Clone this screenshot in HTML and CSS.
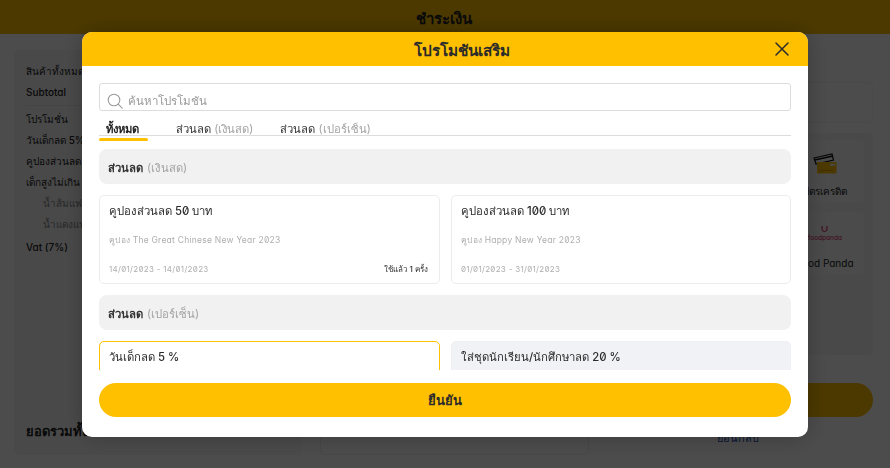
FILE: index.html
```html
<!DOCTYPE html>
<html lang="th">
<head>
<meta charset="utf-8">
<title>ชำระเงิน</title>
<link rel="stylesheet" href="styles.css">
</head>
<body>
<div class="page">
  <header class="page-head">ชำระเงิน</header>
  <main class="page-main">
    <section class="summary">
      <div class="sum-top">
        <p class="sum-row">สินค้าทั้งหมด</p>
        <p class="sum-row">Subtotal</p>
      </div>
      <p class="sum-row">โปรโมชั่น</p>
      <p class="sum-row">วันเด็กลด 5%</p>
      <p class="sum-row">คูปองส่วนลด</p>
      <p class="sum-row">เด็กสูงไม่เกิน</p>
      <p class="sum-row sum-sub">น้ำส้มแฟนต้า</p>
      <p class="sum-row sum-sub">น้ำแดงแฟนต้า</p>
      <p class="sum-row sum-vat">Vat (7%)</p>
      <p class="sum-total">ยอดรวมทั้งหมด</p>
    </section>
    <div class="pay-box"></div>
    <div class="pay-col">
      <div class="pay-info"></div>
      <div class="pay-methods">
        <div class="pay-tile">
          <svg class="card-icon" width="24" height="21" viewBox="0 0 24 21"><path d="M1 5 19 1l1.500 6L3 11z" fill="#fff" stroke="#111" stroke-width="1.200"/><path d="M1.500 7 20 3" stroke="#111" stroke-width="1.400"/><rect x="4" y="9" width="19.500" height="11.500" rx="1" fill="#ffc000"/><rect x="17" y="10.500" width="5" height="2.500" fill="#f3e9c8"/><path d="M6 17.500h14" stroke="#d9a400" stroke-width="1"/></svg>
          <span>บัตรเครดิต</span>
        </div>
        <div class="pay-tile">
          <div class="fp">
            <svg class="fp-icon" width="7" height="7" viewBox="0 0 7 7"><path d="M1 1v3a2.500 2.500 0 0 0 5 0V1" fill="none" stroke="#d70f64"/><path d="M2.500 3h.1M4.500 3h.1" stroke="#d70f64"/></svg>
            <span class="fp-logo">foodpanda</span>
          </div>
          <span>Food Panda</span>
        </div>
      </div>
      <div class="pay-btn"></div>
      <a class="pay-back">ย้อนกลับ</a>
    </div>
  </main>
</div>

<div class="overlay">
  <div class="modal">
    <div class="modal-head">
      <h1 class="modal-title">โปรโมชันเสริม</h1>
      <svg class="modal-close" width="16" height="16" viewBox="0 0 16 16"><path d="M2 2l12 12M14 2 2 14" fill="none" stroke="#2b2b2b" stroke-width="1.500" stroke-linecap="round"/></svg>
    </div>
    <div class="modal-body">
      <div class="search">
        <svg class="search-icon" width="16" height="16" viewBox="0 0 16 16"><circle cx="7" cy="7" r="5.800" fill="none" stroke="#9a9a9a" stroke-width="1.100"/><path d="m11.200 11.200 4 4" stroke="#9a9a9a" stroke-width="1.100" stroke-linecap="round"/></svg>
        <span class="search-text">ค้นหาโปรโมชัน</span>
      </div>
      <nav class="tabs">
        <span class="tab tab-active">ทั้งหมด</span>
        <span class="tab">ส่วนลด <em>(เงินสด)</em></span>
        <span class="tab">ส่วนลด <em>(เปอร์เซ็น)</em></span>
      </nav>
      <div class="promo-scroll">
        <div class="sec-bar">ส่วนลด <em>(เงินสด)</em></div>
        <div class="promo-grid">
          <article class="promo">
            <h2 class="promo-name">คูปองส่วนลด 50 บาท</h2>
            <p class="promo-desc">คูปอง The Great Chinese New Year 2023</p>
            <div class="promo-foot"><span class="promo-date">14/01/2023 - 14/01/2023</span><b>ใช้แล้ว 1 ครั้ง</b></div>
          </article>
          <article class="promo">
            <h2 class="promo-name">คูปองส่วนลด 100 บาท</h2>
            <p class="promo-desc">คูปอง Happy New Year 2023</p>
            <div class="promo-foot"><span class="promo-date">01/01/2023 - 31/01/2023</span></div>
          </article>
        </div>
        <div class="sec-bar">ส่วนลด <em>(เปอร์เซ็น)</em></div>
        <div class="promo-grid">
          <article class="promo promo-selected">
            <h2 class="promo-name">วันเด็กลด 5 %</h2>
          </article>
          <article class="promo promo-off">
            <h2 class="promo-name">ใส่ชุดนักเรียน/นักศึกษาลด 20 %</h2>
          </article>
        </div>
      </div>
      <button class="confirm" type="button">ยืนยัน</button>
    </div>
  </div>
</div>
</body>
</html>
```
FILE: styles.css
```css
* { box-sizing: border-box; }
html, body { margin: 0; height: 100%; }
body {
  width: 890px;
  height: 468px;
  overflow: hidden;
  background: #fff;
  font-family: "Inter", "Noto Sans", "DejaVu Sans", sans-serif;
  font-feature-settings: "zero", "cv11";
  color: #222;
}
p, h1, h2 { margin: 0; font-weight: inherit; }
em { font-style: normal; color: #a3a3a3; }

.page-head {
  height: 34px;
  background: #ffc000;
  text-align: center;
  font-size: 15px;
  font-weight: 600;
  line-height: 37px;
  padding-right: 3px;
}
.page-main {
  display: grid;
  grid-template-columns: 288px 269px 266px;
  column-gap: 18px;
  padding: 16px 17px 0 14px;
  height: 421px;
}
.summary {
  display: flex;
  flex-direction: column;
  gap: 5px;
  background: #f6f6f6;
  border-radius: 5px;
  padding: 13px 12px 0;
  font-size: 10px;
  font-weight: 500;
  overflow: hidden;
}
.sum-top {
  display: flex;
  flex-direction: column;
  gap: 5px;
  border-bottom: 1px solid #e6e6e6;
  padding-bottom: 5px;
}
.sum-row { height: 16px; line-height: 16px; }
.sum-sub { padding-left: 17px; color: #888; font-weight: 400; }
.sum-vat { margin-top: 2px; }
.sum-total { margin-top: auto; font-size: 13px; font-weight: 600; padding-bottom: 13px; }

.pay-box {
  align-self: end;
  height: 20px;
  border: 1px solid #f0f0f0;
  border-radius: 4px;
}
.pay-col {
  display: flex;
  flex-direction: column;
  padding-top: 32px;
}
.pay-info { height: 41px; border: 1px solid #f3f3f3; border-radius: 4px; margin-bottom: 10px; }
.pay-methods {
  height: 222px;
  background: #f6f6f6;
  border-radius: 5px;
  padding: 7px 9px 0 0;
  display: flex;
  flex-direction: column;
  gap: 9px;
  align-items: flex-end;
  font-size: 10px;
  line-height: 14px;
  margin-bottom: 28px;
}
.pay-tile {
  width: 78px;
  height: 63px;
  background: #fafafa;
  border-radius: 5px;
  display: flex;
  flex-direction: column;
  align-items: center;
  justify-content: flex-end;
  gap: 10px;
  padding-bottom: 5px;
  white-space: nowrap;
}
.card-icon { display: block; }
.fp { display: flex; flex-direction: column; align-items: center; gap: 1px; margin-bottom: 3px; }
.fp-icon { display: block; }
.fp-logo { color: #d70f64; font-size: 6.500px; line-height: 10px; }
.pay-btn { height: 34px; background: #ffc000; border-radius: 17px; }
.pay-back { align-self: flex-start; margin: 12px 0 0 110px; color: #1a4fb4; font-size: 11px; }

.overlay {
  position: fixed;
  inset: 0;
  background: rgba(0, 0, 0, .7);
}
.modal {
  position: absolute;
  left: 82px;
  top: 32px;
  width: 726px;
  height: 405px;
  background: #fff;
  border-radius: 10px;
  overflow: hidden;
  display: flex;
  flex-direction: column;
  box-shadow: 0 0 24px rgba(0, 0, 0, .25);
}
.modal-head {
  flex: none;
  height: 34px;
  background: #ffc000;
  display: flex;
  align-items: center;
  justify-content: center;
  position: relative;
  padding: 3px 0 0 34px;
}
.modal-title { font-size: 15.300px; font-weight: 600; color: #2b2b2b; }
.modal-close { position: absolute; right: 18px; top: 9px; }
.modal-body {
  flex: 1;
  min-height: 0;
  padding: 17px 17px 20px;
  display: flex;
  flex-direction: column;
}
.search {
  flex: none;
  height: 28px;
  border: 1px solid #dcdcdc;
  border-radius: 3px;
  display: flex;
  align-items: center;
  gap: 5px;
  padding: 7px 7px 0;
}
.search-icon { flex: none; }
.search-text { font-size: 11.500px; color: #9a9a9a; }
.tabs {
  flex: none;
  height: 25px;
  padding-top: 10px;
  display: flex;
  gap: 27px;
  border-bottom: 1px solid #dcdcdc;
  font-size: 11.250px;
  color: #333;
  margin-bottom: 13px;
  line-height: 16px;
}
.tab { position: relative; white-space: nowrap; height: 16px; }
.tab-active { font-weight: 700; color: #222; width: 49px; padding-left: 7px; margin-right: 1px; }
.tab-active::after {
  content: "";
  position: absolute;
  left: 0;
  top: 17px;
  width: 49px;
  height: 3px;
  border-radius: 2px;
  background: #ffc000;
}
.promo-scroll { flex: none; height: 221px; overflow: hidden; margin-bottom: 13px; }
.sec-bar {
  height: 35px;
  background: #f1f1f1;
  border-radius: 8px;
  padding: 2px 9px 0;
  display: flex;
  align-items: center;
  gap: 4px;
  font-size: 11.300px;
  font-weight: 600;
  color: #333;
  margin-bottom: 11px;
}
.sec-bar em { font-weight: 400; }
.promo-grid {
  display: grid;
  grid-template-columns: 341px 340px;
  column-gap: 11px;
  margin-bottom: 11px;
}
.promo {
  height: 89px;
  border: 1px solid #ececec;
  border-radius: 5px;
  padding: 7px 11px 0 9px;
  display: flex;
  flex-direction: column;
}
.promo-selected { border-color: #ffc000; }
.promo-off { background: #f1f2f6; border-color: #eef0f4; }
.promo-name { font-size: 11.300px; font-weight: 500; line-height: 16px; color: #2b2b2b; }
.promo-desc { font-size: 8.500px; color: #aeaeae; margin-top: 15px; line-height: 12px; letter-spacing: .25px; }
.promo-foot {
  display: flex;
  justify-content: space-between;
  align-items: center;
  margin-top: 17px;
  font-size: 8px;
  color: #aeaeae;
  line-height: 12px;
}
.promo-date { letter-spacing: .3px; }
.promo-foot b { color: #333; font-weight: 500; }
.confirm {
  flex: none;
  height: 34px;
  border: 0;
  border-radius: 17px;
  background: #ffc000;
  font: 600 13px "Inter", "Noto Sans", "DejaVu Sans", sans-serif;
  color: #2b2b2b;
  padding: 0;
}
```
